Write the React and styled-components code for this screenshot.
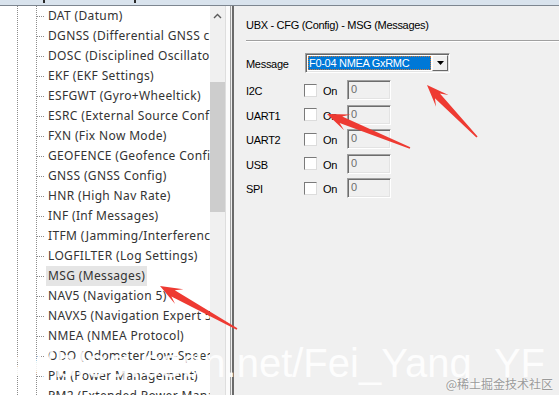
import React from 'react'
import styled, { createGlobalStyle } from 'styled-components'

const GlobalStyle = createGlobalStyle`
  html, body { margin: 0; padding: 0; overflow: hidden; }
  body { width: 559px; height: 395px; background: #f0f0f0; }
`

const nodes = [
  'DAT (Datum)',
  'DGNSS (Differential GNSS config)',
  'DOSC (Disciplined Oscillator)',
  'EKF (EKF Settings)',
  'ESFGWT (Gyro+Wheeltick)',
  'ESRC (External Source Config)',
  'FXN (Fix Now Mode)',
  'GEOFENCE (Geofence Config)',
  'GNSS (GNSS Config)',
  'HNR (High Nav Rate)',
  'INF (Inf Messages)',
  'ITFM (Jamming/Interference Monitor)',
  'LOGFILTER (Log Settings)',
  'MSG (Messages)',
  'NAV5 (Navigation 5)',
  'NAVX5 (Navigation Expert 5)',
  'NMEA (NMEA Protocol)',
  'ODO (Odometer/Low-Speed COG)',
  'PM (Power Management)',
  'PM2 (Extended Power Management)',
]

const ports = ['I2C', 'UART1', 'UART2', 'USB', 'SPI']

// tapered screenshot-style arrow, from tail to tip
const arrowPoints = (x1, y1, x2, y2) => {
  const len = Math.hypot(x2 - x1, y2 - y1)
  const ux = (x2 - x1) / len
  const uy = (y2 - y1) / len
  const px = -uy
  const py = ux
  const at = (d, w) => [x2 - ux * d + px * w, y2 - uy * d + py * w]
  const pts = [
    [x1 + px * 0.8, y1 + py * 0.8],
    at(15, 3.5),
    at(22, 8.5),
    [x2, y2],
    at(22, -8.5),
    at(15, -3.5),
    [x1 - px * 0.8, y1 - py * 0.8],
  ]
  return pts.map(p => p.map(n => n.toFixed(1)).join(',')).join(' ')
}

const arrows = [
  [477, 137, 427, 85],
  [410, 148, 327, 114],
  [237, 329, 160, 286],
]

const App = () => {
  return (
    <Window>
      <GlobalStyle />
      <TopStrip>
        <Tick $left={43} />
        <Tick $left={134} />
      </TopStrip>
      <Main>
        <Tree>
          {nodes.map(n => (
            <Node key={n}>
              <NodeLabel $selected={n === 'MSG (Messages)'}>{n}</NodeLabel>
            </Node>
          ))}
        </Tree>
        <Scrollbar>
          <ScrollArrow>
            <svg width="9" height="6" viewBox="0 0 9 6">
              <path d="M1 5 L4.5 1.5 L8 5" fill="none" stroke="#5a5a5a" strokeWidth="1.4" />
            </svg>
          </ScrollArrow>
          <Thumb />
        </Scrollbar>
        <Splitter />
        <Panel>
          <Title>UBX - CFG (Config) - MSG (Messages)</Title>
          <Form>
            <MessageRow>
              <FieldLabel>Message</FieldLabel>
              <Combo>
                <ComboValue>F0-04 NMEA GxRMC</ComboValue>
                <ComboButton>
                  <svg width="7" height="4" viewBox="0 0 7 4">
                    <path d="M0 0 H7 L3.5 4 Z" fill="#000" />
                  </svg>
                </ComboButton>
              </Combo>
            </MessageRow>
            {ports.map(p => (
              <PortRow key={p}>
                <FieldLabel>{p}</FieldLabel>
                <CheckBox />
                <CheckText>On</CheckText>
                <RateBox>0</RateBox>
              </PortRow>
            ))}
          </Form>
        </Panel>
      </Main>
      <Marks width="559" height="395" viewBox="0 0 559 395">
        {arrows.map((a, i) => (
          <polygon key={i} points={arrowPoints(...a)} fill="#ee3a32" />
        ))}
      </Marks>
      <Watermark>https://blog.csdn.net/Fei_Yang_YF</Watermark>
      <Credit>@稀土掘金技术社区</Credit>
    </Window>
  )
}

export default App

const Window = styled.div`
  position: relative;
  width: 559px;
  height: 395px;
  display: flex;
  flex-direction: column;
  overflow: hidden;
`

const TopStrip = styled.div`
  flex: none;
  position: relative;
  height: 5px;
  background: #d9e3ed;
  border-bottom: 1px solid #7d8690;
`

const Tick = styled.span`
  position: absolute;
  left: ${p => p.$left}px;
  top: 0;
  width: 2px;
  height: 3px;
  background: #2a2a2a;
`

const Main = styled.div`
  flex: 1;
  min-height: 0;
  display: flex;
`

const Tree = styled.ul`
  flex: none;
  width: 210px;
  margin: 0;
  padding: 0;
  list-style: none;
  overflow: hidden;
  background-color: #fff;
  background-image:
    repeating-linear-gradient(to bottom, #8c8c8c 0 1px, transparent 1px 2px),
    repeating-linear-gradient(to bottom, #8c8c8c 0 1px, transparent 1px 2px);
  background-size: 1px 100%, 1px 100%;
  background-position: 17px 0, 36px 0;
  background-repeat: no-repeat;
  font: 12px "Noto Sans", sans-serif;
  letter-spacing: 0.35px;
  color: #333;
`

const Node = styled.li`
  height: 20px;
  line-height: 20px;
  padding-left: 46px;
  white-space: nowrap;
  background: repeating-linear-gradient(to right, #8c8c8c 0 1px, transparent 1px 2px) 37px 10px / 8px 1px no-repeat;
`

const NodeLabel = styled.span`
  display: inline-block;
  padding: 0 2px;
  background: ${p => (p.$selected ? '#e5e5e5' : 'transparent')};
`

const Scrollbar = styled.div`
  flex: none;
  width: 15px;
  background: #f0f0f0;
  display: flex;
  flex-direction: column;
`

const ScrollArrow = styled.div`
  height: 17px;
  display: flex;
  align-items: center;
  justify-content: center;
  padding-top: 2px;
  box-sizing: border-box;
`

const Thumb = styled.div`
  margin-top: 59px;
  height: 130px;
  background: #cdcdcd;
`

const Splitter = styled.div`
  flex: none;
  width: 4px;
  border-left: 1px solid #dedede;
  border-right: 1px solid #a0a0a0;
  background: #fbfbfb;
  box-shadow: inset -3px 0 0 -2px #fbfbfb;
`

const Panel = styled.section`
  flex: 1;
  min-width: 0;
  background: #f0f0f0;
  border-left: 2px solid #6a6a6a;
  margin-left: 1px;
  padding: 12px 0 0 12px;
  font: 11px "Liberation Sans", Arial, sans-serif;
  letter-spacing: -0.3px;
  color: #000;
`

const Title = styled.div`
  line-height: 14px;
  padding-bottom: 8px;
  border-bottom: 1px solid #a0a0a0;
  box-shadow: 0 1px 0 #fff;
`

const Form = styled.div`
  padding-top: 12px;
  display: flex;
  flex-direction: column;
  gap: 4.5px;
`

const MessageRow = styled.div`
  display: flex;
  align-items: center;
  height: 20px;
  margin-bottom: 2.5px;
`

const PortRow = styled.div`
  display: flex;
  align-items: center;
  height: 20px;
`

const FieldLabel = styled.span`
  width: 58px;
  flex: none;
  padding-top: 2px;
`

const Combo = styled.div`
  margin-left: 1px;
  width: 145px;
  height: 20px;
  box-sizing: border-box;
  display: flex;
  border: 1px solid;
  border-color: #a0a0a0 #fff #fff #a0a0a0;
  box-shadow: inset 1px 1px 0 #696969, inset -1px -1px 0 #e3e3e3;
  background: #fff;
  padding: 1px;
`

const ComboValue = styled.div`
  flex: 1;
  margin: 1px 1px 1px 1px;
  background: #0078d7;
  color: #fff;
  line-height: 14px;
  padding-left: 1px;
  outline: 1px dotted #c8783a;
  outline-offset: -1px;
`

const ComboButton = styled.div`
  width: 16px;
  flex: none;
  background: #f0f0f0;
  box-sizing: border-box;
  border: 1px solid;
  border-color: #fff #696969 #696969 #fff;
  display: flex;
  align-items: center;
  justify-content: center;
`

const CheckBox = styled.span`
  width: 13px;
  height: 13px;
  box-sizing: border-box;
  flex: none;
  background: #fff;
  border: 1px solid;
  border-color: #7a7a7a #dcdcdc #dcdcdc #7a7a7a;
`

const CheckText = styled.span`
  width: 24px;
  padding-left: 6px;
  padding-top: 2px;
  flex: none;
`

const RateBox = styled.div`
  width: 44px;
  height: 20px;
  box-sizing: border-box;
  border: 1px solid;
  border-color: #a0a0a0 #fff #fff #a0a0a0;
  box-shadow: inset 1px 1px 0 #6d6d6d, inset -1px -1px 0 #e3e3e3;
  background: #f0f0f0;
  color: #6d6d6d;
  line-height: 16px;
  padding-left: 3px;
`

const Marks = styled.svg`
  position: absolute;
  left: 0;
  top: 0;
  pointer-events: none;
`

const Watermark = styled.div`
  position: absolute;
  right: 14px;
  top: 343px;
  font: 40px/40px "Liberation Sans", Arial, sans-serif;
  color: rgba(255, 255, 255, 0.88);
  white-space: nowrap;
  pointer-events: none;
`

const Credit = styled.div`
  position: absolute;
  right: 6px;
  bottom: 3px;
  font: 12px/16px "Noto Sans CJK SC", sans-serif;
  color: #9a9a9a;
  text-shadow: 0 0 2px #fff;
  white-space: nowrap;
`
